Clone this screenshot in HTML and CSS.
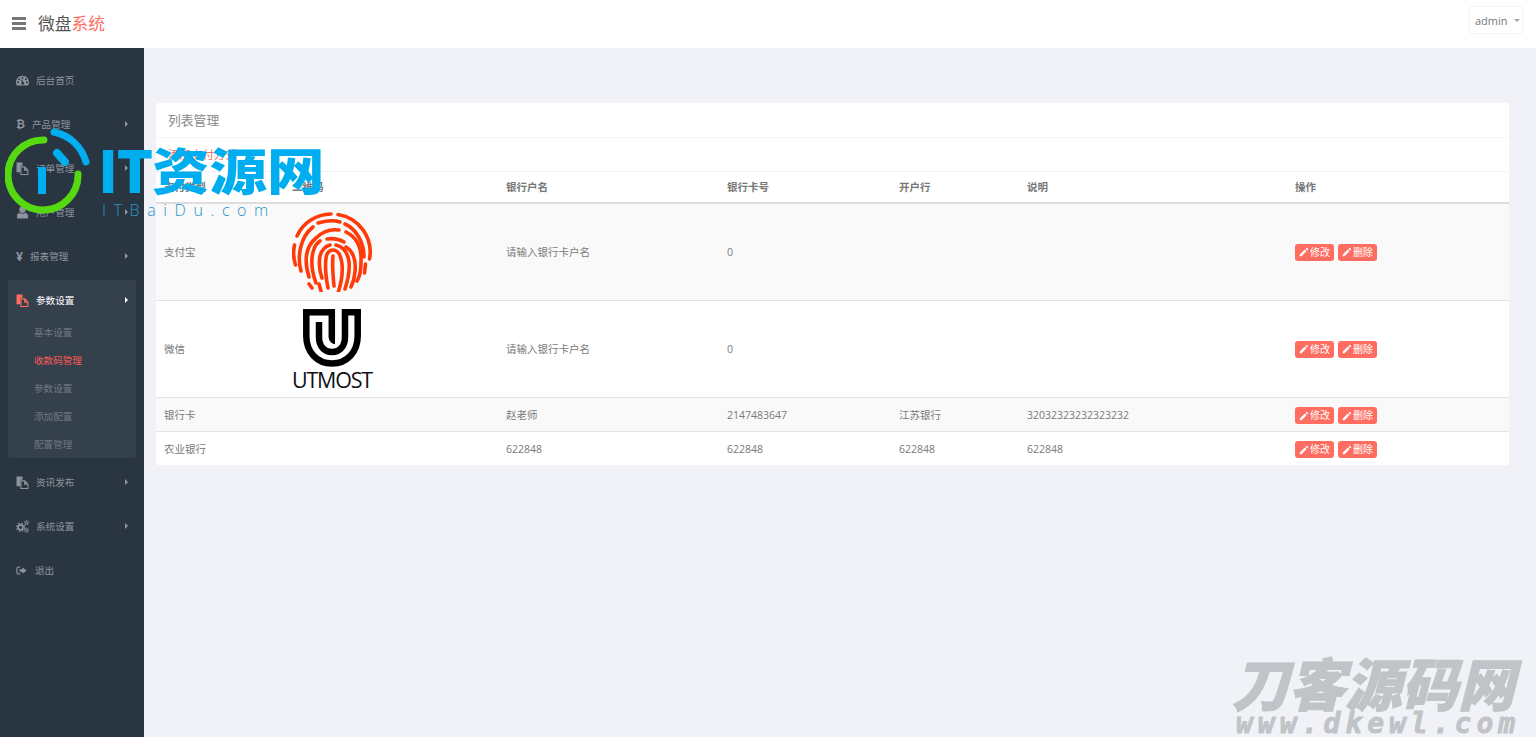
FILE: index.html
```html
<!DOCTYPE html>
<html lang="zh">
<head>
<meta charset="utf-8">
<title>微盘系统</title>
<link rel="stylesheet" href="styles.css">
</head>
<body>
<svg class="defs" xmlns="http://www.w3.org/2000/svg">
  <symbol id="i-gauge" viewBox="0 0 24 24"><path fill="currentColor" fill-rule="evenodd" d="M12 3C5.4 3 0 8.4 0 15c0 2.2.6 4.3 1.7 6h20.6c1.100-1.700 1.700-3.800 1.700-6 0-6.600-5.400-12-12-12zM12 5a1.800 1.800 0 1 1 0 3.600A1.800 1.800 0 0 1 12 5zM5.800 8a1.800 1.800 0 1 1 0 3.600A1.800 1.800 0 0 1 5.800 8zM18.200 8a1.800 1.800 0 1 1 0 3.600 1.800 1.800 0 0 1 0-3.600zM3.800 13.500a1.800 1.800 0 1 1 0 3.600 1.800 1.800 0 0 1 0-3.600zM20.200 13.500a1.800 1.800 0 1 1 0 3.600 1.800 1.800 0 0 1 0-3.600zM10.500 15.500 9.800 9.800l1.200-.2 2.400 5.300a2.500 2.500 0 1 1-2.900.6z"/></symbol>
  <symbol id="i-files" viewBox="0 0 24 24"><path fill="currentColor" d="M1 1h11v6H8v12H1z"/><path fill="none" stroke="currentColor" stroke-width="2" d="M9 9h7l6 6v8H9zM16 9v6h6"/></symbol>
  <symbol id="i-user" viewBox="0 0 24 24"><circle cx="12" cy="7" r="6" fill="currentColor"/><path fill="currentColor" d="M2 23v-5c0-3 2-5 5-5 1.500 1 3 1.500 5 1.500s3.500-.5 5-1.500c3 0 5 2 5 5v5z"/></symbol>
  <symbol id="i-cogs" viewBox="0 0 24 24"><circle cx="8.500" cy="13.500" r="4.500" fill="none" stroke="currentColor" stroke-width="3"/><circle cx="8.500" cy="13.500" r="7.200" fill="none" stroke="currentColor" stroke-width="2.500" stroke-dasharray="3 2.650"/><circle cx="19.500" cy="5" r="2.300" fill="none" stroke="currentColor" stroke-width="1.800"/><circle cx="19.500" cy="5" r="3.900" fill="none" stroke="currentColor" stroke-width="1.500" stroke-dasharray="2 1.060"/><circle cx="19.500" cy="19" r="2.300" fill="none" stroke="currentColor" stroke-width="1.800"/><circle cx="19.500" cy="19" r="3.900" fill="none" stroke="currentColor" stroke-width="1.500" stroke-dasharray="2 1.060"/></symbol>
  <symbol id="i-out" viewBox="0 0 24 24"><path fill="none" stroke="currentColor" stroke-width="2.500" d="M9 4.500H5a3 3 0 0 0-3 3v9a3 3 0 0 0 3 3h4"/><path fill="currentColor" d="M8 9.500h6V5l9 7-9 7v-4.500H8z"/></symbol>
  <symbol id="i-pencil" viewBox="0 0 24 24"><path fill="currentColor" d="M2 18v4h4L18 10l-4-4zM15.500 4.500l4 4 2.200-2.200a1.200 1.200 0 0 0 0-1.700l-2.300-2.300a1.200 1.200 0 0 0-1.700 0z"/></symbol>
</svg>

<header class="topbar">
  <div class="burger"><span></span><span></span><span></span></div>
  <div class="brand">微盘<em>系统</em></div>
  <div class="user-btn">admin<i class="caret"></i></div>
</header>

<div class="layout">
  <aside class="sidebar">
    <div class="nav-item"><svg class="ic w13"><use href="#i-gauge"/></svg><span class="gap7">后台首页</span></div>
    <div class="nav-item"><span class="glyph btc">₿</span><span class="gap7">产品管理</span><i class="arrow"></i></div>
    <div class="nav-item"><svg class="ic w13"><use href="#i-files"/></svg><span class="gap7">订单管理</span><i class="arrow"></i></div>
    <div class="nav-item"><svg class="ic w13"><use href="#i-user"/></svg><span class="gap7">用户管理</span><i class="arrow"></i></div>
    <div class="nav-item"><span class="glyph yen">¥</span><span class="gap7">报表管理</span><i class="arrow"></i></div>
    <div class="nav-group">
      <div class="nav-item head"><svg class="ic w13"><use href="#i-files"/></svg><span class="gap7">参数设置</span><i class="arrow"></i></div>
      <a class="sub">基本设置</a>
      <a class="sub on">收款码管理</a>
      <a class="sub">参数设置</a>
      <a class="sub">添加配置</a>
      <a class="sub">配置管理</a>
    </div>
    <div class="nav-item"><svg class="ic w13"><use href="#i-files"/></svg><span class="gap7">资讯发布</span><i class="arrow"></i></div>
    <div class="nav-item"><svg class="ic w13"><use href="#i-cogs"/></svg><span class="gap7">系统设置</span><i class="arrow"></i></div>
    <div class="nav-item"><svg class="ic w11"><use href="#i-out"/></svg><span class="gap8">退出</span></div>
  </aside>

  <main class="main">
    <section class="panel">
      <div class="panel-title">列表管理</div>
      <div class="panel-note">添加支付方式</div>
      <table class="grid">
        <colgroup>
          <col class="c1"><col class="c2"><col class="c3"><col class="c4"><col class="c5"><col class="c6"><col class="c7">
        </colgroup>
        <thead>
          <tr><th>支付类型</th><th>二维码</th><th>银行户名</th><th>银行卡号</th><th>开户行</th><th>说明</th><th>操作</th></tr>
        </thead>
        <tbody>
          <tr>
            <td>支付宝</td>
            <td>
              <svg class="qr" viewBox="0 0 80 80" fill="none" stroke="#ff3b0a" stroke-width="3.600" stroke-linecap="round">
                <path d="M3.500 53A38 38 0 0 1 2.500 33"/>
                <path d="M5 24A38 38 0 0 1 39 2"/>
                <path d="M46 2.500A38 38 0 0 1 77.500 47"/>
                <path d="M73.500 52L72.500 61"/>
                <path d="M9 59C5 45 8 25 21 15"/>
                <path d="M26 11C33 9 42 8 48 10"/>
                <path d="M53 12C64 17 72 30 72 45"/>
                <path d="M17 65C13 52 12 36 24 26C31 19 40 17 47 18"/>
                <path d="M54 20C64 25 70 34 69 50C69 58 67 66 65 69"/>
                <path d="M24 71C20 60 18 48 22 37C23 34 25 31 28 29"/>
                <path d="M35 27C41 26 47 27 52 30"/>
                <path d="M54 35C62 40 64 50 63 60C62.500 66 61 71 59 75"/>
                <path d="M30 66C27 58 27 50 28 44C30 37 34 34 38 33"/>
                <path d="M44 33C52 35 56 42 57 50C58 60 56 68 53 77"/>
                <path d="M36 76C34 66 33 54 34 46C35 40 38 38 41 38C46 38 49 44 50 52C51 62 49 72 46 81"/>
                <path d="M42 74C41 64 40 52 41 44"/>
                <path d="M17 72L20 76"/>
                <path d="M27 72L29 79"/>
              </svg>
            </td>
            <td>请输入银行卡户名</td>
            <td>0</td><td></td><td></td>
            <td><div class="acts"><a class="btn"><svg class="pen"><use href="#i-pencil"/></svg>修改</a><a class="btn"><svg class="pen"><use href="#i-pencil"/></svg>删除</a></div></td>
          </tr>
          <tr>
            <td>微信</td>
            <td>
              <div class="utmost">
                <svg class="umark" viewBox="0 0 58 58" fill="none" stroke="#000" stroke-width="6.500">
                  <path d="M3.300 3.300V27C3.300 43 14 54.500 29 54.500S54.700 43 54.700 27V3.300"/>
                  <path d="M0 3.300H31.500"/>
                  <path d="M28.800 0V28C28.800 31 31.500 32 32 32"/>
                  <path d="M16 13V28C16 37 21 43 29 43S42 37 42 28V3.300H58"/>
                </svg>
                <span class="utxt">UTMOST</span>
              </div>
            </td>
            <td>请输入银行卡户名</td>
            <td>0</td><td></td><td></td>
            <td><div class="acts"><a class="btn"><svg class="pen"><use href="#i-pencil"/></svg>修改</a><a class="btn"><svg class="pen"><use href="#i-pencil"/></svg>删除</a></div></td>
          </tr>
          <tr>
            <td>银行卡</td><td></td><td>赵老师</td><td>2147483647</td><td>江苏银行</td><td>32032323232323232</td>
            <td><div class="acts"><a class="btn"><svg class="pen"><use href="#i-pencil"/></svg>修改</a><a class="btn"><svg class="pen"><use href="#i-pencil"/></svg>删除</a></div></td>
          </tr>
          <tr>
            <td>农业银行</td><td></td><td>622848</td><td>622848</td><td>622848</td><td>622848</td>
            <td><div class="acts"><a class="btn"><svg class="pen"><use href="#i-pencil"/></svg>修改</a><a class="btn"><svg class="pen"><use href="#i-pencil"/></svg>删除</a></div></td>
          </tr>
        </tbody>
      </table>
    </section>
  </main>
</div>

<div class="wm-it">
  <svg class="wm-ring" viewBox="0 0 90 90" fill="none" stroke-linecap="round">
    <path d="M39 12A35 35 0 1 0 73 46" stroke="#55d911" stroke-width="7"/>
    <path d="M49 4A42 42 0 0 1 81 34" stroke="#00aeef" stroke-width="7"/>
    <path d="M52 25L60 34" stroke="#00aeef" stroke-width="8"/>
    <path d="M33 39H41V66H33z" fill="#00aeef"/>
  </svg>
  <div class="wm-big"><span class="wm-lat">IT</span><span class="wm-cjk">资源网</span></div>
  <div class="wm-small">ITBaiDu.com</div>
</div>

<div class="wm-dk">
  <div class="dk-big">刀客源码网</div>
  <div class="dk-small">www.dkewl.com</div>
</div>
</body>
</html>
```
FILE: styles.css
```css
* { box-sizing: border-box; }
html, body { margin: 0; height: 100%; overflow: hidden; }
body {
  font-family: "Open Sans", "Noto Sans CJK SC", sans-serif;
  font-size: 10.5px;
  color: #797979;
  background: #f1f2f7;
  display: flex;
  flex-direction: column;
}
.defs { display: none; }

.topbar {
  height: 48px;
  flex: none;
  background: #fff;
  display: flex;
  align-items: center;
  padding: 0 13px 0 12px;
}
.burger { width: 14px; display: flex; flex-direction: column; gap: 2px; margin-top: -1px; }
.burger span { height: 3px; background: #777; display: block; }
.brand {
  margin-left: 12px;
  font-size: 16.750px;
  color: #555;
  line-height: 48px;
}
.brand em { font-style: normal; color: #ff6c60; }
.user-btn {
  margin-left: auto;
  align-self: flex-start;
  margin-top: 6px;
  height: 28px;
  width: 54px;
  border: 1px solid #f4f4f4;
  border-radius: 3px;
  display: flex;
  align-items: center;
  padding-left: 5px;
  font-size: 11px;
  color: #777;
}
.caret {
  margin-left: 6px;
  border: 3px solid transparent;
  border-top-color: #a5a5ad;
  border-bottom: 0;
}

.layout { flex: 1; display: flex; min-height: 0; }
.sidebar {
  width: 144px;
  flex: none;
  background: #2a3542;
  padding-top: 12px;
  color: #8a9199;
  display: flex;
  flex-direction: column;
  gap: 4px;
}
.nav-item {
  height: 40px;
  margin: 0 8px;
  padding: 0 8px;
  display: flex;
  align-items: center;
  font-size: 9.600px;
  color: #8d949c;
  flex: none;
}
.ic { display: block; flex: none; height: 13px; color: #8d949c; }
.w13 { width: 13px; }
.w11 { width: 11px; }
.gap7 { margin-left: 7px; }
.gap8 { margin-left: 8px; }
.glyph { flex: none; font-family: "DejaVu Sans", sans-serif; font-weight: 700; color: #8d949c; }
.btc { width: 9px; font-size: 11px; }
.yen { width: 7px; font-size: 12px; font-family: "Open Sans", sans-serif; }
.arrow {
  margin-left: auto;
  border: 3px solid transparent;
  border-left: 3.500px solid #8d949c;
  border-right: 0;
}
.nav-group {
  margin: 0 8px;
  background: #35404d;
  border-radius: 3px;
  flex: none;
}
.nav-group .nav-item.head {
  margin: 0;
  height: 38px;
  padding-top: 2px;
  color: #fff;
}
.head .ic { color: #ff6c60; }
.head .arrow { border-left-color: #fff; }
.sub {
  display: block;
  height: 28px;
  line-height: 29px;
  padding-left: 26px;
  font-size: 9.600px;
  color: #6f7781;
}
.sub.on { color: #ff5a52; }

.main { flex: 1; padding: 55px 27px 0 12px; }
.panel { background: #fff; border-radius: 3px; overflow: hidden; }
.panel-title {
  height: 35px;
  padding-left: 12px;
  line-height: 34px;
  font-size: 12.800px;
  color: #8a8a8a;
  border-bottom: 1px solid #f5f5f5;
}
.panel-note {
  height: 34px;
  padding-left: 12px;
  line-height: 33px;
  font-size: 11.500px;
  color: #ff6c60;
  border-bottom: 1px solid #f2f2f2;
}
.grid {
  width: 100%;
  table-layout: fixed;
  border-collapse: separate;
  border-spacing: 0;
}
.c1 { width: 128px; }
.c2 { width: 214px; }
.c3 { width: 221px; }
.c4 { width: 172px; }
.c5 { width: 128px; }
.c6 { width: 268px; }
.c7 { width: 222px; }
th {
  height: 32px;
  padding: 0 8px 2px;
  text-align: left;
  font-weight: 700;
  font-size: 10.500px;
  color: #777;
  border-bottom: 2px solid #ddd;
}
td {
  padding: 8px;
  line-height: 17px;
  border-top: 1px solid #e3e3e3;
  vertical-align: middle;
}
tbody tr:first-child td { border-top: 0; }
tbody tr:nth-child(odd) td { background: #f9f9f9; }
tbody tr:nth-child(n+3) td { padding: 9px 8px 7px; }
.qr { display: block; width: 80px; height: 80px; }
.utmost { width: 80px; height: 80px; display: flex; flex-direction: column; align-items: center; }
.umark { display: block; width: 58px; height: 58px; flex: none; }
.utxt {
  font-family: "Open Sans", sans-serif;
  font-size: 21.500px;
  line-height: 26px;
  letter-spacing: -1.200px;
  color: #111;
  white-space: nowrap;
}
.acts { display: flex; gap: 4px; }
.btn {
  width: 39px;
  height: 17px;
  background: #ff6c60;
  border-radius: 3px;
  color: #fff;
  font-size: 10px;
  line-height: 17px;
  display: flex;
  align-items: center;
  justify-content: center;
  gap: 1px;
}
.pen { width: 10px; height: 10px; display: block; flex: none; }

/* overlays */
.wm-it { position: absolute; left: 0; top: 130px; width: 340px; height: 95px; }
.wm-ring { position: absolute; left: 5px; top: -2px; width: 90px; height: 90px; }
.wm-big {
  position: absolute;
  left: 98px;
  top: 2px;
  font-family: "Noto Sans CJK SC", sans-serif;
  font-weight: 900;
  font-size: 57.500px;
  line-height: 72px;
  color: #00aeef;
  white-space: nowrap;
}
.wm-lat { letter-spacing: -1.500px; }
.wm-cjk { display: inline-block; transform: scaleY(0.87); }
.wm-small {
  position: absolute;
  left: 102px;
  top: 70px;
  font-family: "Open Sans", sans-serif;
  font-weight: 300;
  font-size: 16px;
  line-height: 20px;
  letter-spacing: 7.600px;
  color: #2a94c4;
  white-space: nowrap;
}
.wm-dk { position: absolute; left: 1232px; top: 650px; width: 300px; color: #c0c3c7; }
.dk-big {
  font-family: "Noto Sans CJK SC", sans-serif;
  font-weight: 900;
  font-style: italic;
  font-size: 56.500px;
  line-height: 62px;
  white-space: nowrap;
  -webkit-text-stroke: 1px #c0c3c7;
}
.dk-small {
  font-family: "DejaVu Sans Mono", monospace;
  font-weight: 700;
  font-style: italic;
  font-size: 28px;
  line-height: 24px;
  letter-spacing: 5px;
  white-space: nowrap;
  padding-left: 4px;
  -webkit-text-stroke: 0.8px #c0c3c7;
}
```
